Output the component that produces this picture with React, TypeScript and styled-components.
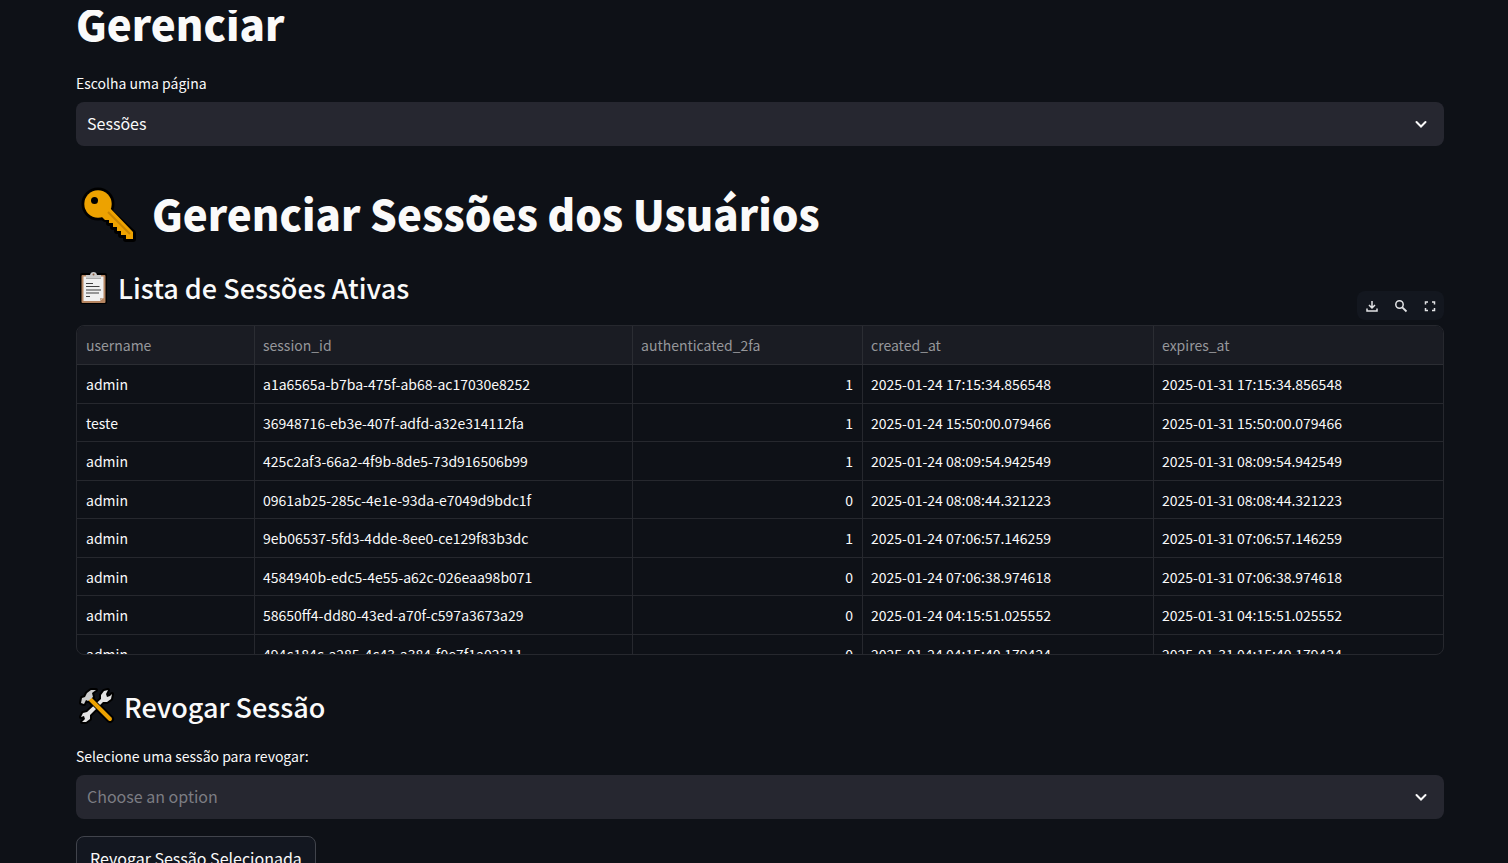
import React from "react";
import styled, { createGlobalStyle } from "styled-components";

const GlobalStyle = createGlobalStyle`
  * { box-sizing: border-box; }
  html { background: #0e1117; }
  body {
    margin: 0;
    height: 100vh;
    overflow: hidden;
    background: #0e1117;
    color: #fafafa;
    font-family: "Noto Sans CJK SC", "Open Sans", sans-serif;
    font-size: 16px;
  }
`;

const TopBar = styled.header`
  height: 10px;
`;

const Main = styled.main`
  overflow: hidden;
  padding: 0 64px 0 76px;
`;

const Title = styled.h1`
  display: flex;
  align-items: flex-start;
  gap: 16px;
  margin: 0;
  font-size: 42px;
  font-weight: 800;
  line-height: 52px;
`;

const PageTitle = styled(Title)`
  margin: -13px 0 24px;
`;

const SectionTitle = styled(Title)`
  margin: 41px 0 0;
  padding-left: 5px;
`;

const Subtitle = styled.h3`
  display: flex;
  align-items: center;
  gap: 10px;
  margin: 0;
  padding-left: 3px;
  font-size: 27px;
  font-weight: 500;
  line-height: 36px;
`;

const Field = styled.div`
  display: flex;
  flex-direction: column;
  gap: 9px;
`;

const Label = styled.label`
  font-size: 14px;
  line-height: 20px;
`;

const SelectBox = styled.div`
  position: relative;
  display: flex;
`;

const Select = styled.select<{ $muted?: boolean }>`
  appearance: none;
  width: 100%;
  height: 44px;
  padding: 0 40px 2px 11px;
  border: 0;
  border-radius: 8px;
  background: #262730;
  color: ${(p) => (p.$muted ? "#7c7d83" : "#fafafa")};
  font: inherit;
`;

const Chevron = styled.svg`
  position: absolute;
  top: 14px;
  right: 15px;
  pointer-events: none;
`;

const ListHeader = styled.div`
  display: flex;
  justify-content: space-between;
  align-items: flex-start;
  margin-top: 28px;
`;

const Toolbar = styled.div`
  display: flex;
  margin-top: 21px;
  border-radius: 8px;
  background: #13171f;
`;

const ToolButton = styled.button`
  display: flex;
  align-items: center;
  justify-content: center;
  width: 29px;
  height: 29px;
  padding: 0;
  border: 0;
  background: none;
  color: #e3e4e6;
`;

const TableFrame = styled.div`
  height: 330px;
  margin-top: 5px;
  overflow: hidden;
  border: 1px solid #26282e;
  border-radius: 8px;
`;

const Table = styled.table`
  width: 100%;
  table-layout: fixed;
  border-collapse: separate;
  border-spacing: 0;
  font-size: 14px;
  line-height: 20px;
`;

const HeadCell = styled.th`
  height: 39px;
  padding: 0 9px;
  border-bottom: 1px solid #2b2d33;
  background: #1a1c23;
  color: #96979b;
  font-weight: 400;
  text-align: left;
  & + & { padding-left: 8px; border-left: 1px solid #2b2d33; }
`;

const Row = styled.tr`
  height: 39px;
  &:nth-child(even) { height: 38px; }
`;

const Cell = styled.td<{ $numeric?: boolean }>`
  padding: 0 9px;
  border-bottom: 1px solid #26282e;
  text-align: ${(p) => (p.$numeric ? "right" : "left")};
  & + & { padding-left: 8px; border-left: 1px solid #26282e; }
`;

const RevokeTitle = styled(Subtitle)`
  margin: 34px 0 21px;
`;

const RevokeButton = styled.button`
  height: 44px;
  margin-top: 17px;
  padding: 0 13px;
  border: 1px solid #41444c;
  border-radius: 8px;
  background: #131720;
  color: #fafafa;
  font: inherit;
`;

const columns = [
  { name: "username", width: 177 },
  { name: "session_id", width: 378 },
  { name: "authenticated_2fa", width: 230 },
  { name: "created_at", width: 291 },
  { name: "expires_at", width: 290 },
];

const sessions = [
  ["admin", "a1a6565a-b7ba-475f-ab68-ac17030e8252", 1, "2025-01-24 17:15:34.856548", "2025-01-31 17:15:34.856548"],
  ["teste", "36948716-eb3e-407f-adfd-a32e314112fa", 1, "2025-01-24 15:50:00.079466", "2025-01-31 15:50:00.079466"],
  ["admin", "425c2af3-66a2-4f9b-8de5-73d916506b99", 1, "2025-01-24 08:09:54.942549", "2025-01-31 08:09:54.942549"],
  ["admin", "0961ab25-285c-4e1e-93da-e7049d9bdc1f", 0, "2025-01-24 08:08:44.321223", "2025-01-31 08:08:44.321223"],
  ["admin", "9eb06537-5fd3-4dde-8ee0-ce129f83b3dc", 1, "2025-01-24 07:06:57.146259", "2025-01-31 07:06:57.146259"],
  ["admin", "4584940b-edc5-4e55-a62c-026eaa98b071", 0, "2025-01-24 07:06:38.974618", "2025-01-31 07:06:38.974618"],
  ["admin", "58650ff4-dd80-43ed-a70f-c597a3673a29", 0, "2025-01-24 04:15:51.025552", "2025-01-31 04:15:51.025552"],
  ["admin", "494c184c-a285-4c43-a384-f0e7f1a02311", 0, "2025-01-24 04:15:40.179424", "2025-01-31 04:15:40.179424"],
];

const ChevronIcon = () => (
  <Chevron width="16" height="16" viewBox="0 0 16 16" fill="none" stroke="#fafafa" strokeWidth="2" strokeLinecap="round" aria-hidden="true">
    <path d="M3.5 6 8 10.5 12.5 6" />
  </Chevron>
);

const KeyIcon = () => (
  <svg width="55" height="55" viewBox="0 0 55 55" aria-hidden="true">
    <g stroke="#000" strokeWidth="6" strokeLinejoin="round" fill="#000">
      <circle cx="17" cy="17" r="13.5" />
      <path d="M19 28 26 22 52 46V52H45V48H40V44H36V40H32V36H28V32H24Z" />
    </g>
    <circle cx="17" cy="17" r="13.7" fill="#eda200" />
    <path d="M19 28 28 20 52 45V52H45V48H40V44H36V40H32V36H28V33H24Z" fill="#eda200" />
    <path d="M27 25 49 47" stroke="#c98500" strokeWidth="2" />
    <circle cx="13.5" cy="13.5" r="3.5" fill="#000" />
  </svg>
);

const ClipboardIcon = () => (
  <svg width="29" height="34" viewBox="0 0 29 34" aria-hidden="true">
    <rect x="1" y="2" width="27" height="31" rx="2" fill="#000" />
    <rect x="2.5" y="4" width="24" height="28" rx="1" fill="#b58561" />
    <path d="M4.5 5.5H24.5V27L21 30H4.5Z" fill="#f0f0f0" />
    <path d="M24.5 27 21 30V27Z" fill="#c4a890" />
    <path d="M7 6.5H22V8H7Z" fill="#a9a9a9" />
    <path d="M7 6V4H11Q11.5 1 14.5 1T18 4H22V6Z" fill="#cbcbcb" />
    <circle cx="14.5" cy="3.5" r="1" fill="#8b5b3e" />
    <path d="M7 12.5H14M7 15.5H20.5M7 19H22M7 22H20M7 25.5H11" stroke="#3f3f3f" strokeWidth="1.2" />
  </svg>
);

const wrench =
  "M4 24 8 23 22 10 22 6 25 2 29 1 27 5 28 8 31 7 33 5 32 10 28 13 24 13 11 26 11 30 7 33 3 33 6 30 5 27 2 28Z";
const hammerHead = "M2 14 3 9 6 8 8 4 12 1 17 1 13 4 14 8 9 12 7 11 5 15Z";

const ToolsIcon = () => (
  <svg width="35" height="36" viewBox="0 0 35 36" overflow="visible" strokeLinejoin="round" aria-hidden="true">
    <g fill="#000" stroke="#000" strokeWidth="4">
      <path d={wrench} />
      <path d={hammerHead} />
      <path d="M11 10 31 30" strokeWidth="8" strokeLinecap="round" />
    </g>
    <path d={wrench} fill="#e3e3e3" />
    <path d="M11 10 31 30" stroke="#000" strokeWidth="6" />
    <path d="M11 10 31 30" stroke="#eda200" strokeWidth="4" strokeLinecap="round" />
    <path d={hammerHead} fill="#cdcdcd" />
  </svg>
);

const DownloadIcon = () => (
  <svg width="16" height="16" viewBox="0 0 16 16" fill="none" stroke="currentColor" strokeWidth="1.5" aria-hidden="true">
    <path d="M8 3V9.5M5 7 8 10 11 7M3 10.5V13H13V10.5" />
  </svg>
);

const SearchIcon = () => (
  <svg width="16" height="16" viewBox="0 0 16 16" fill="none" stroke="currentColor" strokeWidth="1.5" aria-hidden="true">
    <circle cx="6.5" cy="6.5" r="3.7" />
    <path d="M9.3 9.3 13.5 13.5" strokeWidth="1.8" />
  </svg>
);

const FullscreenIcon = () => (
  <svg width="16" height="16" viewBox="0 0 16 16" fill="none" stroke="currentColor" strokeWidth="1.5" aria-hidden="true">
    <path d="M3.5 6.5V4H6M10 4H12.5V6.5M12.5 10V12.5H10M6 12.5H3.5V10" />
  </svg>
);

export default function App() {
  return (
    <>
      <GlobalStyle />
      <TopBar />
      <Main>
        <PageTitle>Gerenciar</PageTitle>
        <Field>
          <Label htmlFor="page">Escolha uma página</Label>
          <SelectBox>
            <Select id="page" defaultValue="sessoes">
              <option value="sessoes">Sessões</option>
            </Select>
            <ChevronIcon />
          </SelectBox>
        </Field>

        <SectionTitle><KeyIcon />Gerenciar Sessões dos Usuários</SectionTitle>

        <ListHeader>
          <Subtitle><ClipboardIcon />Lista de Sessões Ativas</Subtitle>
          <Toolbar>
            <ToolButton aria-label="Download"><DownloadIcon /></ToolButton>
            <ToolButton aria-label="Search"><SearchIcon /></ToolButton>
            <ToolButton aria-label="Fullscreen"><FullscreenIcon /></ToolButton>
          </Toolbar>
        </ListHeader>
        <TableFrame>
          <Table>
            <colgroup>
              {columns.map((c) => <col key={c.name} width={c.width} />)}
            </colgroup>
            <thead>
              <tr>{columns.map((c) => <HeadCell key={c.name}>{c.name}</HeadCell>)}</tr>
            </thead>
            <tbody>
              {sessions.map((row) => (
                <Row key={row[1]}>
                  {row.map((value, i) => (
                    <Cell key={columns[i].name} $numeric={typeof value === "number"}>{value}</Cell>
                  ))}
                </Row>
              ))}
            </tbody>
          </Table>
        </TableFrame>

        <RevokeTitle><ToolsIcon />Revogar Sessão</RevokeTitle>
        <Field>
          <Label htmlFor="session">Selecione uma sessão para revogar:</Label>
          <SelectBox>
            <Select id="session" $muted defaultValue="">
              <option value="">Choose an option</option>
            </Select>
            <ChevronIcon />
          </SelectBox>
        </Field>
        <RevokeButton>Revogar Sessão Selecionada</RevokeButton>
      </Main>
    </>
  );
}
